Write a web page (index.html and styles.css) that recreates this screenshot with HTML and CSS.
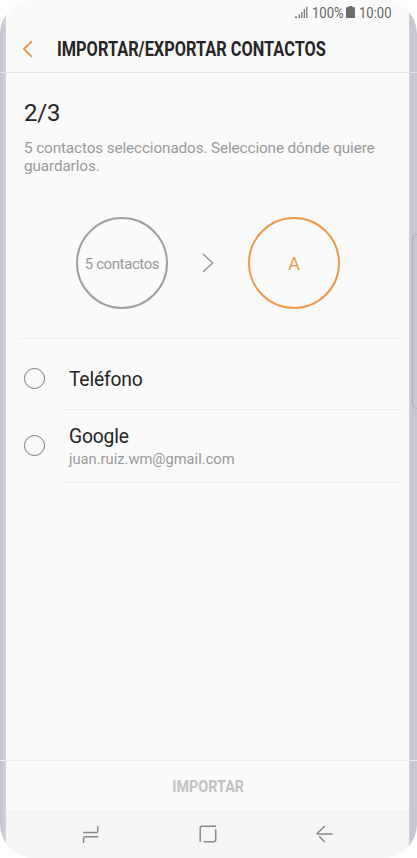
FILE: index.html
```
<!DOCTYPE html>
<html lang="es">
<head>
    <meta charset="UTF-8">
    <meta name="viewport" content="width=device-width, initial-scale=1.0">
    <title>Importar/Exportar contactos</title>
    <link rel="stylesheet" href="styles.css">
</head>
<body>
    <div class="phone">
        <!-- Botón lateral -->
        <div class="side-button"></div>

        <!-- Barra de estado -->
        <div class="status">
            <svg class="signal" width="13" height="12" viewBox="0 0 13 12">
                <path d="M0 12v-1.6h2V12zM3.7 12V8.5H5V12zM6.2 12V6h1.2v6zM8.7 12V3h1.2v9zM11.2 12V0.5h1.2V12z"/>
            </svg>
            <span class="status-text battery-text">100%</span>
            <svg class="battery" width="9" height="12" viewBox="0 0 9 12">
                <path d="M2.5 0h4v1.2H9V12H0V1.2h2.5z"/>
            </svg>
            <span class="status-text clock">10:00</span>
        </div>

        <!-- Cabecera -->
        <header class="header">
            <svg class="back" width="11" height="18" viewBox="0 0 11 18">
                <path d="M9.9 1.2L1.9 9l8 7.8"/>
            </svg>
            <h1>IMPORTAR/EXPORTAR CONTACTOS</h1>
        </header>

        <!-- Paso actual -->
        <section class="step">
            <h2>2/3</h2>
            <p>5 contactos seleccionados. Seleccione dónde quiere guardarlos.</p>
        </section>

        <div class="transfer">
            <div class="circle">5 contactos</div>
            <svg class="arrow" width="12" height="20" viewBox="0 0 12 20">
                <path d="M1 1l9.7 9L1 19"/>
            </svg>
            <div class="circle target">A</div>
        </div>

        <!-- Destinos -->
        <ul class="options">
            <li class="option">
                <span class="radio"></span>
                <div class="option-text">
                    <span class="name">Teléfono</span>
                </div>
            </li>
            <li class="option account">
                <span class="radio"></span>
                <div class="option-text">
                    <span class="name">Google</span>
                    <span class="email">juan.ruiz.wm@gmail.com</span>
                </div>
            </li>
        </ul>

        <div class="action"><span>IMPORTAR</span></div>

        <!-- Barra de navegación -->
        <nav class="nav">
            <svg width="18" height="19" viewBox="0 0 18 19">
                <path d="M1.2 7.5h13.3q1.3 0 1.3-1.3V1M1.6 18v-4.8q0-1.5 1.5-1.5h13.2"/>
            </svg>
            <svg width="18" height="18" viewBox="0 0 18 18">
                <path d="M1.2 16.7V3.2q0-2 2-2H17M16.7 4.2V14.7q0 2-2 2H4.6"/>
            </svg>
            <svg width="18" height="18" viewBox="0 0 18 18">
                <path d="M9.8 1L2.4 8.2q-.7.8 0 .8H17.6M4.2 11.2l5.6 5.8"/>
            </svg>
        </nav>
    </div>
</body>
</html>
```
FILE: styles.css
```
* {
    box-sizing: border-box;
    margin: 0;
    padding: 0;
}

body {
    background: #fff;
    font-family: Roboto, sans-serif;
}

svg {
    display: block;
    flex: none;
}

/* Marco del teléfono */
.phone {
    position: relative;
    display: flex;
    flex-direction: column;
    width: 417px;
    height: 858px;
    overflow: hidden;
    border-radius: 34px;
    background: linear-gradient(to right, #c3c5cc 0, #cbccd3 3px, #d3d4da 6px, #fafafa 6px, #fafafa 409px, #d3d4da 409px, #c5c6ce 411px, #c8c9d1 417px);
}

.side-button {
    position: absolute;
    top: 234px;
    left: 412px;
    width: 10px;
    height: 175px;
    border: 1px solid #adaeb6;
    border-radius: 5px;
}

/* Barra de estado */
.status {
    display: flex;
    height: 26px;
    padding: 6px 0 0 295px;
    fill: #6c6c6c;
}

.status-text {
    font-size: 15px;
    line-height: 15px;
    color: #666;
    transform: scaleX(0.87);
    transform-origin: left;
    white-space: nowrap;
}

.battery-text {
    width: 31px;
    margin-left: 4px;
}

.battery {
    margin-left: 3px;
}

.clock {
    width: 34px;
    margin-left: 4px;
}

/* Cabecera */
.header {
    display: flex;
    align-items: center;
    height: 47px;
    padding-left: 22px;
    border-bottom: 1px solid #e2e2e3;
}

.header h1 {
    margin-top: 2px;
    margin-left: 24px;
    font-size: 19.5px;
    line-height: 24px;
    color: #252525;
    white-space: nowrap;
    transform: scaleX(0.838);
    transform-origin: left;
}

.back {
    fill: none;
    stroke: #e89548;
    stroke-width: 1.8;
}

/* Paso */
.step {
    height: 144px;
    padding: 26px 30px 0 24px;
}

.step h2 {
    font-size: 24px;
    font-weight: 400;
    line-height: 28px;
    letter-spacing: -0.2px;
    color: #252525;
}

.step p {
    margin-top: 12px;
    font-size: 15.3px;
    line-height: 18px;
    letter-spacing: -0.12px;
    color: #999;
}

.transfer {
    display: flex;
    align-items: center;
    height: 122px;
    margin: 0 18px 0 19px;
    padding: 0 59px 29px 57px;
    justify-content: space-between;
    border-bottom: 1px solid #ececec;
}

.circle {
    display: flex;
    align-items: center;
    justify-content: center;
    width: 92px;
    height: 92px;
    padding-top: 1px;
    border: 2px solid #a0a0a0;
    border-radius: 50%;
    font-size: 15px;
    letter-spacing: -0.4px;
    color: #999;
    white-space: nowrap;
}

.target {
    border: 2.5px solid #ed9a4f;
    font-size: 18px;
    letter-spacing: 0;
    color: #ed9a4f;
}

.arrow {
    fill: none;
    stroke: #909090;
    stroke-width: 1.3;
}

/* Lista de destinos */
.options {
    flex: 1;
    list-style: none;
}

.option {
    display: flex;
    align-items: center;
    height: 71px;
    padding: 0 18px 0 24px;
}

.account {
    height: 73px;
}

.radio {
    flex: none;
    width: 21px;
    height: 21px;
    margin: 8px 19px 0 0;
    border: 1.5px solid #777;
    border-radius: 50%;
}

.account .radio {
    margin: 0 19px 2px 0;
}

.option-text {
    display: flex;
    flex: 1;
    flex-direction: column;
    height: 100%;
    padding: 29px 0 0 5px;
    border-bottom: 1px solid #ececec;
}

.account .option-text {
    padding-top: 15px;
}

.name {
    font-size: 19.3px;
    line-height: 24px;
    letter-spacing: -0.2px;
    color: #252525;
}

.email {
    font-size: 14.7px;
    line-height: 20px;
    color: #999;
}

/* Acción inferior */
.action {
    height: 50px;
    padding-top: 15px;
    border-top: 1px solid #ececec;
    font-size: 17.3px;
    font-weight: 700;
    line-height: 20px;
    text-align: center;
    color: #c2c2c2;
}

.action span {
    display: inline-block;
    transform: scaleX(0.83);
}

/* Navegación */
.nav {
    display: flex;
    align-items: center;
    justify-content: space-between;
    height: 48px;
    margin: 0 8px 0 6px;
    padding: 0 76px;
    background: #f5f5f5;
    fill: none;
    stroke: #888;
    stroke-width: 1.5;
}
```
